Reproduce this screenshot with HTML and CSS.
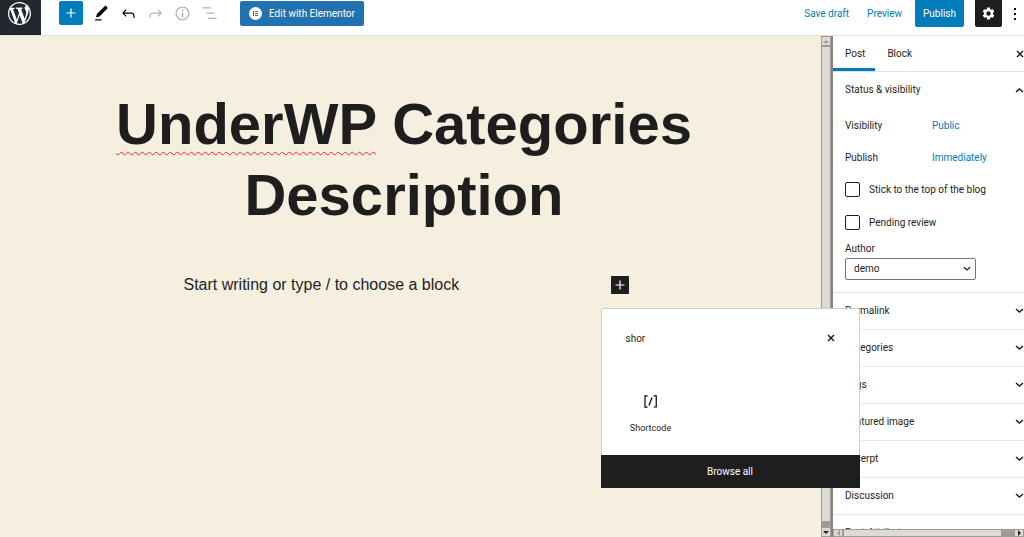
FILE: index.html
```
<!DOCTYPE html>
<html lang="en">
<head>
    <meta charset="UTF-8">
    <meta name="viewport" content="width=device-width, initial-scale=1.0">
    <title>Edit Post</title>
    <link rel="stylesheet" href="styles.css">
</head>
<body>
    <header class="header">
        <a class="wp-logo" href="#" aria-label="View posts">
            <svg width="23" height="23" viewBox="0 0 20 20"><path fill="#fff" d="M20 10c0-5.51-4.49-10-10-10C4.48 0 0 4.49 0 10c0 5.52 4.48 10 10 10 5.51 0 10-4.48 10-10zM7.78 15.37L4.37 6.22c.55-.02 1.17-.08 1.17-.08.5-.06.44-1.13-.06-1.11 0 0-1.45.11-2.37.11-.18 0-.37 0-.58-.01C4.12 2.69 6.87 1.11 10 1.11c2.33 0 4.45.87 6.05 2.34-.68-.11-1.65.39-1.65 1.58 0 .74.45 1.36.9 2.1.35.61.55 1.36.55 2.46 0 1.49-1.4 5-1.4 5l-3.03-8.37c.54-.02.82-.17.82-.17.5-.05.44-1.25-.06-1.22 0 0-1.44.12-2.38.12-.87 0-2.33-.12-2.33-.12-.5-.03-.56 1.2-.06 1.22l.92.08 1.26 3.41zM17.41 10c.24-.64.74-1.87.43-4.25.7 1.29 1.05 2.71 1.05 4.25 0 3.29-1.73 6.24-4.4 7.78.97-2.59 1.94-5.2 2.92-7.78zM6.1 18.09C3.12 16.65 1.11 13.53 1.11 10c0-1.3.23-2.48.72-3.59C3.25 10.3 4.67 14.2 6.1 18.09zm4.03-6.63l2.58 6.98c-.86.29-1.76.45-2.71.45-.79 0-1.57-.11-2.29-.33.81-2.38 1.62-4.74 2.42-7.1z"/></svg>
        </a>
        <div class="tools">
            <button class="tool add" aria-label="Add block">
                <svg width="18" height="18" viewBox="0 0 24 24"><path fill="#fff" d="M18 11.2h-5.2V6h-1.6v5.2H6v1.6h5.2V18h1.6v-5.2H18z"/></svg>
            </button>
            <button class="tool" aria-label="Tools">
                <svg width="19" height="19" viewBox="0 0 24 24"><path d="M20.1 5.1L16.9 2 6.2 12.7l-1.3 4.4 4.5-1.3L20.1 5.1zM4 20.8h8v-1.5H4v1.5z"/></svg>
            </button>
            <button class="tool" aria-label="Undo">
                <svg width="19" height="19" viewBox="0 0 24 24"><path d="M18.3 11.7c-.6-.6-1.4-.9-2.3-.9H6.7l2.9-3.3-1.1-1-4.5 5L8.5 16l1-1-2.7-2.7H16c.5 0 .9.2 1.3.5 1 1 1 3.4 1 4.5v.3h1.5v-.2c0-1.5 0-4.3-1.5-5.7z"/></svg>
            </button>
            <button class="tool" aria-label="Redo" disabled>
                <svg width="19" height="19" viewBox="0 0 24 24"><path d="M15.6 6.5l-1.1 1 2.9 3.3H8c-.9 0-1.7.3-2.3.9-1.4 1.5-1.4 4.2-1.4 5.6v.2h1.5v-.3c0-1.1 0-3.5 1-4.5.3-.3.7-.5 1.3-.5h9.2L14.5 15l1.1 1.1 4.6-4.6-4.6-5z"/></svg>
            </button>
            <button class="tool" aria-label="Details" disabled>
                <svg width="19" height="19" viewBox="0 0 24 24"><path d="M12 3.2c-4.8 0-8.8 3.9-8.8 8.8 0 4.8 3.9 8.8 8.8 8.8 4.8 0 8.8-3.9 8.8-8.8 0-4.8-4-8.8-8.8-8.8zm0 16c-4 0-7.2-3.3-7.2-7.2C4.8 8 8 4.8 12 4.8s7.2 3.3 7.2 7.2c0 4-3.2 7.2-7.2 7.2zM11 17h2v-6h-2v6zm0-8h2V7h-2v2z"/></svg>
            </button>
            <button class="tool" aria-label="List view" disabled>
                <svg width="19" height="19" viewBox="0 0 24 24"><path d="M3 4h11v1.6H3zM8 10.8h10v1.6H8zM10 17.4h11V19H10z"/></svg>
            </button>
        </div>
        <button class="elementor">
            <svg width="13" height="13" viewBox="0 0 13 13"><circle cx="6.5" cy="6.5" r="6.5" fill="#fff"/><path fill="#2271b1" d="M4 4h1v5H4zM6 4h3v1H6zM6 6h3v1H6zM6 8h3v1H6z"/></svg>
            Edit with Elementor
        </button>
        <div class="actions">
            <button class="link">Save draft</button>
            <button class="link">Preview</button>
            <button class="publish">Publish</button>
            <button class="settings" aria-label="Settings">
                <svg width="19" height="19" viewBox="0 0 24 24"><path fill="#fff" fill-rule="evenodd" d="M10.3 4.5h3.4l.5 2.2 1.2.7 2.2-.7 1.7 3-1.7 1.5v1.6l1.7 1.5-1.7 3-2.2-.7-1.2.7-.5 2.2h-3.4l-.5-2.2-1.2-.7-2.2.7-1.7-3 1.7-1.5v-1.6L4.7 9.7l1.7-3 2.2.7 1.2-.7zM12 9.2a2.8 2.8 0 1 0 0 5.6 2.8 2.8 0 0 0 0-5.6z"/></svg>
            </button>
            <button class="more" aria-label="Options">
                <svg width="4" height="14" viewBox="0 0 4 14"><path d="M1 1h2v2H1zM1 6h2v2H1zM1 11h2v2H1z"/></svg>
            </button>
        </div>
    </header>

    <div class="content">
        <main class="editor">
            <h1 class="title"><span class="misspelled">UnderWP</span> Categories Description</h1>
            <div class="paragraph">
                <p>Start writing or type / to choose a block</p>
                <div class="inserter">
                    <button class="inserter-toggle" aria-label="Add block">
                        <svg width="18" height="18" viewBox="0 0 24 24"><path fill="#fff" d="M18 11.2h-5.2V6h-1.6v5.2H6v1.6h5.2V18h1.6v-5.2H18z"/></svg>
                    </button>
                    <div class="popover">
                        <div class="search">
                            <input type="text" value="shor" aria-label="Search for a block">
                            <button aria-label="Reset search">
                                <svg width="8" height="8" viewBox="0 0 8 8"><path d="M1 1l6 6M7 1L1 7" stroke="#1e1e1e" stroke-width="1.5"/></svg>
                            </button>
                        </div>
                        <button class="block-type">
                            <svg width="19" height="19" viewBox="0 0 24 24"><path d="M16 4.2v1.5h2.5v12.5H16v1.5h4V4.2h-4zM4.2 19.8h4v-1.5H5.8V5.8h2.5V4.2h-4v15.6zm5.1-3.1l1.4.6 4-10-1.4-.6-4 10z"/></svg>
                            Shortcode
                        </button>
                        <button class="browse">Browse all</button>
                    </div>
                </div>
            </div>
        </main>

        <div class="scrollbar vertical">
            <span class="arrow up"></span>
            <span class="thumb"></span>
            <span class="arrow down"></span>
        </div>

        <aside class="sidebar">
            <div class="tabs">
                <button class="tab active">Post</button>
                <button class="tab">Block</button>
                <button class="close" aria-label="Close settings">
                    <svg width="8" height="8" viewBox="0 0 8 8"><path d="M1 1l6 6M7 1L1 7" stroke="#1e1e1e" stroke-width="1.5"/></svg>
                </button>
            </div>
            <div class="panels">
                <section class="status">
                    <button class="panel-toggle">Status &amp; visibility
                        <svg width="9" height="6" viewBox="0 0 9 6"><path d="M1 5l3.5-3L8 5" fill="none" stroke="#1e1e1e" stroke-width="1.5"/></svg>
                    </button>
                    <div class="row"><span>Visibility</span><button class="link">Public</button></div>
                    <div class="row"><span>Publish</span><button class="link">Immediately</button></div>
                    <label class="check"><input type="checkbox">Stick to the top of the blog</label>
                    <label class="check"><input type="checkbox">Pending review</label>
                    <label class="author-label" for="author">Author</label>
                    <div class="select">
                        <select id="author"><option>demo</option></select>
                        <svg width="8" height="6" viewBox="0 0 9 6"><path d="M1 1l3.5 3L8 1" fill="none" stroke="#1e1e1e" stroke-width="1.5"/></svg>
                    </div>
                </section>
                <button class="panel-toggle">Permalink
                    <svg width="9" height="6" viewBox="0 0 9 6"><path d="M1 1l3.5 3L8 1" fill="none" stroke="#1e1e1e" stroke-width="1.5"/></svg>
                </button>
                <button class="panel-toggle">Categories
                    <svg width="9" height="6" viewBox="0 0 9 6"><path d="M1 1l3.5 3L8 1" fill="none" stroke="#1e1e1e" stroke-width="1.5"/></svg>
                </button>
                <button class="panel-toggle">Tags
                    <svg width="9" height="6" viewBox="0 0 9 6"><path d="M1 1l3.5 3L8 1" fill="none" stroke="#1e1e1e" stroke-width="1.5"/></svg>
                </button>
                <button class="panel-toggle">Featured image
                    <svg width="9" height="6" viewBox="0 0 9 6"><path d="M1 1l3.5 3L8 1" fill="none" stroke="#1e1e1e" stroke-width="1.5"/></svg>
                </button>
                <button class="panel-toggle">Excerpt
                    <svg width="9" height="6" viewBox="0 0 9 6"><path d="M1 1l3.5 3L8 1" fill="none" stroke="#1e1e1e" stroke-width="1.5"/></svg>
                </button>
                <button class="panel-toggle">Discussion
                    <svg width="9" height="6" viewBox="0 0 9 6"><path d="M1 1l3.5 3L8 1" fill="none" stroke="#1e1e1e" stroke-width="1.5"/></svg>
                </button>
                <button class="panel-toggle">Post Attributes</button>
            </div>
            <div class="scrollbar horizontal">
                <span class="arrow left"></span>
                <span class="thumb"></span>
                <span class="arrow right"></span>
            </div>
        </aside>
    </div>
</body>
</html>
```
FILE: styles.css
```
* {
    box-sizing: border-box;
}

body {
    margin: 0;
    height: 100vh;
    display: flex;
    flex-direction: column;
    overflow: hidden;
    font-family: Roboto, "Noto Sans", sans-serif;
    font-size: 10px;
    line-height: 16px;
    color: #1e1e1e;
    background: #fff;
}

button,
input,
select {
    font: inherit;
    color: inherit;
    margin: 0;
    padding: 0;
    border: none;
    background: none;
}

button {
    cursor: pointer;
}

svg {
    display: block;
    flex: none;
}

/* Header */
.header {
    display: flex;
    align-items: flex-start;
    flex: none;
    height: 36px;
    border-bottom: 1px solid #e0e0e0;
}

.wp-logo {
    display: flex;
    justify-content: center;
    width: 41px;
    height: 35px;
    padding: 2px 3px 0 0;
    background: #23282e;
}

.tools {
    display: flex;
    gap: 3px;
    padding: 1px 0 0 18px;
}

.tool {
    display: flex;
    align-items: center;
    justify-content: center;
    width: 24px;
    height: 24px;
}

.tool:disabled {
    opacity: 0.3;
}

.add {
    margin-right: 3px;
    border-radius: 2px;
    background: #007cba;
}

.elementor {
    display: flex;
    align-items: center;
    gap: 7px;
    height: 25px;
    margin: 1px 0 0 19px;
    padding: 0 9px;
    border-radius: 2px;
    color: #fff;
    background: #2271b1;
}

.actions {
    display: flex;
    align-items: center;
    height: 27px;
    margin-left: auto;
}

.link {
    color: #007cba;
}

.actions .link {
    margin-right: 18px;
}

.publish {
    height: 27px;
    margin-left: -5px;
    padding: 0 8px;
    border-radius: 0 0 2px 2px;
    color: #fff;
    background: #007cba;
}

.settings {
    display: flex;
    align-items: center;
    justify-content: center;
    width: 27px;
    height: 27px;
    margin-left: 11px;
    border-radius: 0 0 2px 2px;
    background: #1e1e1e;
}

.more {
    padding: 0 7px 0 11px;
}

/* Editor canvas */
.content {
    display: flex;
    flex: 1;
    min-height: 0;
}

.editor {
    flex: 1;
    min-width: 0;
    padding: 52px 97px 0 88px;
    font-family: "Liberation Sans", Arial, sans-serif;
    background: #f5efe0;
}

.title {
    margin: 0;
    padding-right: 4px;
    font-size: 58px;
    line-height: 71px;
    font-weight: bold;
    text-align: center;
}

.misspelled {
    text-decoration: underline wavy #ff2020 1px;
    text-decoration-skip-ink: none;
    text-underline-offset: 7px;
}

.paragraph {
    display: flex;
    align-items: center;
    justify-content: space-between;
    max-width: 445px;
    margin: 46px auto 0;
}

.paragraph p {
    margin: 0;
    font-size: 16px;
    line-height: 18px;
}

.inserter {
    position: relative;
    font-family: Roboto, "Noto Sans", sans-serif;
}

.inserter-toggle {
    display: flex;
    align-items: center;
    justify-content: center;
    width: 18px;
    height: 18px;
    border-radius: 1px;
    background: #1e1e1e;
}

.popover {
    position: absolute;
    top: 32px;
    left: -10px;
    z-index: 1;
    display: flex;
    flex-direction: column;
    width: 259px;
    height: 180px;
    border: 1px solid #ccc;
    border-radius: 2px;
    background: #fff;
}

.search {
    display: flex;
    align-items: center;
    justify-content: space-between;
    padding: 20px 24px 0;
}

.search input {
    flex: 1;
    min-width: 0;
    height: 18px;
    outline: none;
}

.block-type {
    display: flex;
    flex-direction: column;
    align-items: center;
    gap: 9px;
    width: 80px;
    margin: 45px 0 0 9px;
    font-size: 9px;
}

.browse {
    height: 33px;
    margin: auto -1px -1px;
    color: #fff;
    background: #1e1e1e;
}

/* Scrollbars */
.scrollbar {
    display: flex;
    flex: none;
    background: #a09c94;
}

.scrollbar .thumb {
    flex: 1;
    border: 1px solid #a09c94;
    background: #dcdad5;
}

.vertical {
    flex-direction: column;
    width: 12px;
    border-right: 2px solid #8a867e;
}

.vertical .thumb {
    margin-bottom: 5px;
}

.horizontal {
    height: 8px;
}

.horizontal .thumb {
    margin-right: 12px;
}

.arrow {
    display: flex;
    align-items: center;
    justify-content: center;
    width: 10px;
    height: 10px;
    border: 1px solid #a09c94;
    background: #dcdad5;
}

.horizontal .arrow {
    height: auto;
}

.arrow::before {
    content: "";
    border: 3px solid transparent;
}

.up::before {
    border-top: none;
    border-bottom-color: #a09c94;
}

.down::before {
    border-bottom: none;
    border-top-color: #1e1e1e;
}

.left::before {
    border-left: none;
    border-right-color: #a09c94;
}

.right::before {
    border-right: none;
    border-left-color: #1e1e1e;
}

/* Sidebar */
.sidebar {
    display: flex;
    flex-direction: column;
    flex: none;
    width: 191px;
}

.tabs {
    display: flex;
    flex: none;
    height: 36px;
    border-bottom: 1px solid #e0e0e0;
}

.tab {
    padding: 4px 10px 0 12px;
    border-bottom: 3px solid transparent;
}

.active {
    border-bottom-color: #007cba;
}

.close {
    margin-left: auto;
}

.panels {
    flex: 1;
    min-height: 0;
    overflow: hidden;
}

.panel-toggle {
    display: flex;
    align-items: center;
    justify-content: space-between;
    width: 100%;
    height: 37px;
    padding: 0 0 0 12px;
    border-bottom: 1px solid #e8e8e8;
}

.status {
    padding-bottom: 12px;
    border-bottom: 1px solid #e0e0e0;
}

.status .panel-toggle {
    padding-bottom: 2px;
    border-bottom: none;
}

.row {
    display: grid;
    grid-template-columns: 87px 1fr;
    justify-items: start;
    padding: 9px 0 7px 12px;
}

.check {
    display: flex;
    align-items: center;
    gap: 9px;
    height: 33px;
    padding-left: 12px;
}

.check input {
    appearance: none;
    width: 15px;
    height: 15px;
    margin: 0;
    border: 1px solid #1e1e1e;
    border-radius: 2px;
}

.author-label {
    display: block;
    padding: 2px 0 1px 12px;
}

.select {
    display: grid;
    align-items: center;
    width: 131px;
    margin-left: 12px;
}

.select select {
    grid-area: 1 / 1;
    appearance: none;
    height: 22px;
    padding: 0 8px;
    border: 1px solid #757575;
    border-radius: 2px;
}

.select svg {
    grid-area: 1 / 1;
    justify-self: end;
    margin-right: 5px;
    pointer-events: none;
}
```
